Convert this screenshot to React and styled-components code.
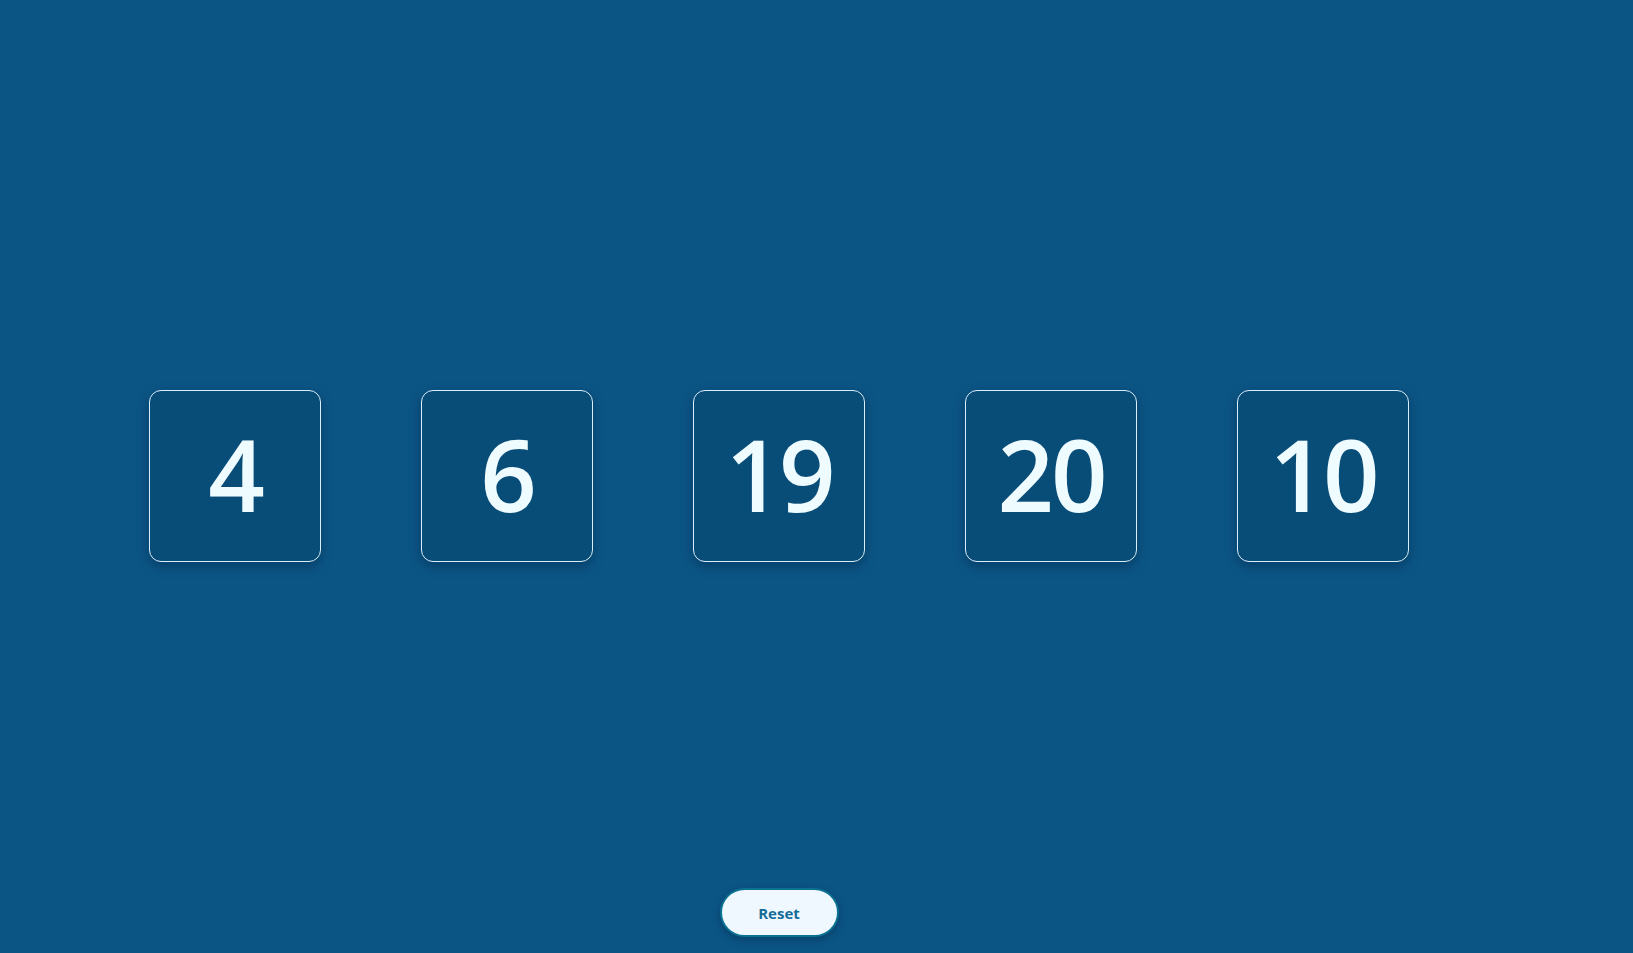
import React, { useState } from 'react';
import styled, { createGlobalStyle } from 'styled-components';

const GlobalStyle = createGlobalStyle`
  html, body {
    margin: 0;
    padding: 0;
    background: #0b5585;
  }
  * {
    box-sizing: border-box;
  }
`;

const Page = styled.div`
  min-height: 100vh;
  background: #0b5585;
  padding: 390px 0 0 149px;
  font-family: "Open Sans", "Noto Sans", sans-serif;
`;

const Board = styled.div`
  display: flex;
  flex-direction: column;
  align-items: center;
  width: fit-content;
  gap: 326px;
`;

const CardRow = styled.div`
  display: flex;
  gap: 100px;
`;

const Card = styled.div`
  width: 172px;
  height: 172px;
  display: flex;
  align-items: center;
  justify-content: center;
  padding-bottom: 6px;
  background: #084c78;
  border: 1px solid #d8eef8;
  border-radius: 12px;
  box-shadow: 0 4px 12px rgba(0, 20, 45, 0.35);
  color: #effcff;
  font-size: 99px;
  font-weight: 600;
  line-height: 1;
  letter-spacing: -3px;
`;

const ResetButton = styled.button`
  width: 119px;
  height: 49px;
  border-radius: 25px;
  border: 2px solid #0b7191;
  background: #f0f8ff;
  color: #156c99;
  font-family: "Open Sans", "Noto Sans", sans-serif;
  font-size: 15px;
  font-weight: 700;
  cursor: pointer;
  box-shadow: 0 3px 8px rgba(0, 20, 45, 0.3);
`;

const initial = [4, 6, 19, 20, 10];

export default function App() {
  const [numbers, setNumbers] = useState(initial);

  return (
    <>
      <GlobalStyle />
      <Page>
        <Board>
          <CardRow>
            {numbers.map((n, i) => (
              <Card key={i}>{n}</Card>
            ))}
          </CardRow>
          <ResetButton onClick={() => setNumbers(initial)}>Reset</ResetButton>
        </Board>
      </Page>
    </>
  );
}
